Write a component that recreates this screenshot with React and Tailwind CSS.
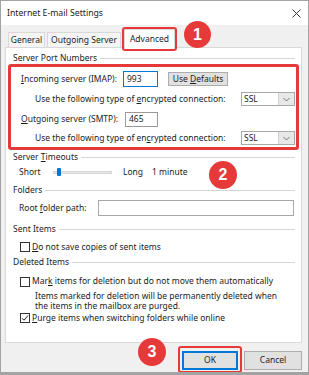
import React from "react";

function Section({ children, className = "" }) {
  return (
    <div className={`flex items-center pl-[7px] pr-[6px] ${className}`}>
      <span className="whitespace-nowrap">{children}</span>
      <div className="ml-[3px] h-px flex-1 bg-[#d5d5d5]" />
    </div>
  );
}

function Checkbox({ checked }) {
  return (
    <div className="flex h-[10px] w-[10px] shrink-0 items-center justify-center border border-[#333] bg-white">
      {checked && (
        <svg width="8" height="8" viewBox="0 0 8 8">
          <path d="M1 4.2L3 6.2L7 1.5" fill="none" stroke="#222" strokeWidth="1" />
        </svg>
      )}
    </div>
  );
}

function Select() {
  return (
    <div className="flex h-[14px] w-[54px] items-center border border-[#a8a8a8] bg-white">
      <span className="flex-1 pl-[2px]">SSL</span>
      <div className="flex h-full w-[16px] items-center justify-center border-l border-[#d0d0d0] bg-[#e8e8e8]">
        <svg width="7" height="5" viewBox="0 0 7 5">
          <path d="M0.5 1L3.5 4L6.5 1" fill="none" stroke="#777" strokeWidth="1" />
        </svg>
      </div>
    </div>
  );
}

function Badge({ n, className }) {
  return (
    <div
      className={`absolute flex items-center justify-center rounded-full bg-[#e63a3a] text-[16px] font-bold text-white font-['Liberation_Sans',sans-serif] ${className}`}
    >
      {n}
    </div>
  );
}

export default function App() {
  return (
    <div className="relative h-[375px] w-[309px] overflow-hidden border border-b-[3px] border-[#a3a3a3] bg-[#f0f0f0] font-['Noto_Sans',sans-serif] text-[8.5px] leading-none text-[#1c1c1c]">
      {/* title bar */}
      <div className="flex h-[24px] items-center justify-between bg-white pl-[6px] pr-[6px]">
        <span className="text-[8.7px]">Internet E-mail Settings</span>
        <svg width="9" height="9" viewBox="0 0 9 9" className="mr-[1px]">
          <path d="M0.5 0.5L8.5 8.5M8.5 0.5L0.5 8.5" stroke="#333" strokeWidth="1" />
        </svg>
      </div>

      {/* tabs */}
      <div className="flex h-[22px] items-end pl-[7px]">
        <div className="flex h-[15px] w-[37px] items-center justify-center border border-b-0 border-[#d9d9d9] bg-[#f5f5f5]">
          General
        </div>
        <div className="ml-[2px] flex h-[15px] w-[74px] items-center justify-center border border-b-0 border-[#d9d9d9] bg-[#f5f5f5]">
          Outgoing Server
        </div>
        <div className="relative z-10 -mb-px ml-[3px] flex h-[19px] w-[51px] items-center justify-center border border-b-0 border-[#d9d9d9] bg-white">
          Advanced
        </div>
      </div>

      {/* panel */}
      <div className="ml-[4px] flex h-[296px] w-[297px] flex-col border border-[#d9d9d9] bg-white pt-[5px]">
        <Section className="h-[11px]">Server Port Numbers</Section>

        <div className="mx-[2px] rounded-[3px] border-[3px] border-[#e63a3a] pt-[2px]">
          <div className="flex h-[20px] items-center pl-[10px]">
            <span className="w-[102px]">
              <u className="underline-offset-1">I</u>ncoming server (IMAP):
            </span>
            <div className="flex h-[16px] w-[35px] items-center border border-[#0078d7] bg-white pl-[3px]">993</div>
            <div className="ml-[10px] flex h-[14px] w-[60px] items-center justify-center border border-[#adadad] bg-[#e1e1e1]">
              Use&nbsp;<u className="underline-offset-1">D</u>efaults
            </div>
          </div>
          <div className="flex h-[20px] items-center pl-[24px] pr-[1px]">
            <span>
              Use the following type of <u className="underline-offset-1">e</u>ncrypted connection:
            </span>
            <div className="ml-auto">
              <Select />
            </div>
          </div>
          <div className="flex h-[20px] items-center pl-[10px]">
            <span className="w-[104px]">
              <u className="underline-offset-1">O</u>utgoing server (SMTP):
            </span>
            <div className="flex h-[15px] w-[33px] items-center border border-[#9a9a9a] bg-white pl-[3px]">465</div>
          </div>
          <div className="flex h-[18px] items-center pl-[24px] pr-[1px]">
            <span>
              Use the following type of en<u className="underline-offset-1">c</u>rypted connection:
            </span>
            <div className="ml-auto">
              <Select />
            </div>
          </div>
        </div>

        <Section className="h-[14px]">
          <span>
            Server <u className="underline-offset-1">T</u>imeouts
          </span>
        </Section>
        <div className="flex h-[16px] items-center pl-[13px]">
          <span className="w-[34px]">Short</span>
          <div className="relative h-[3px] w-[59px] border border-[#d6d6d6] bg-[#e7e7e7]">
            <div className="absolute left-[3px] top-[-3.5px] h-[8px] w-[4px] rounded-[1px] bg-[#0078d7]" />
          </div>
          <span className="ml-[11px] w-[29px]">Long</span>
          <span>1 minute</span>
        </div>

        <Section className="h-[20px]">Folders</Section>
        <div className="flex h-[16px] items-center pl-[13px]">
          <span className="w-[79px]">
            Root <u className="underline-offset-1">f</u>older path:
          </span>
          <div className="h-[16px] w-[196px] border border-[#a8a8a8] bg-white" />
        </div>

        <Section className="h-[26px]">Sent Items</Section>
        <div className="flex h-[10px] items-center gap-[2px] pl-[14px]">
          <Checkbox />
          <span>
            <u className="underline-offset-1">D</u>o not save copies of sent items
          </span>
        </div>

        <Section className="h-[20px]">Deleted Items</Section>
        <div className="flex h-[19px] items-center gap-[2px] pl-[14px]">
          <Checkbox />
          <span>
            Mar<u className="underline-offset-1">k</u> items for deletion but do not move them automatically
          </span>
        </div>
        <div className="pl-[29px] leading-[10px]">
          <div>Items marked for deletion will be permanently deleted when</div>
          <div>the items in the mailbox are purged.</div>
        </div>
        <div className="flex h-[14px] items-center gap-[2px] pl-[14px]">
          <Checkbox checked />
          <span>
            <u className="underline-offset-1">P</u>urge items when switching folders while online
          </span>
        </div>
      </div>

      {/* buttons */}
      <div className="mt-[8px] flex justify-end gap-[6px] pr-[6px]">
        <div className="flex h-[19px] w-[56px] items-center justify-center border-2 border-[#0078d7] bg-[#e1e1e1]">OK</div>
        <div className="flex h-[19px] w-[58px] items-center justify-center border border-[#adadad] bg-[#e1e1e1]">Cancel</div>
      </div>

      {/* annotations */}
      <div className="absolute left-[121px] top-[26px] z-20 h-[24px] w-[55px] rounded-[3px] border-[2.5px] border-[#e63a3a]" />
      <div className="absolute left-[177px] top-[345px] z-20 h-[27px] w-[64px] rounded-[3px] border-[2.5px] border-[#e63a3a]" />
      <Badge n="1" className="left-[183px] top-[20px] z-30 h-[27px] w-[27px]" />
      <Badge n="2" className="left-[208px] top-[160px] z-30 h-[28px] w-[28px]" />
      <Badge n="3" className="left-[137px] top-[337px] z-30 h-[28px] w-[28px]" />
    </div>
  );
}
